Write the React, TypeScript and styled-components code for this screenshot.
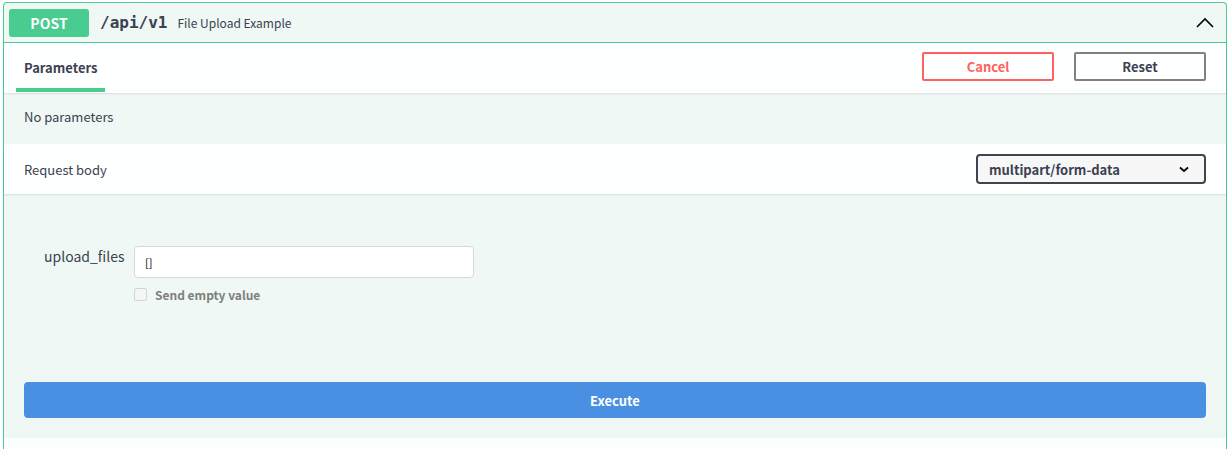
import React from "react";
import styled, { createGlobalStyle } from "styled-components";

const Global = createGlobalStyle`
  body {
    margin: 0;
    background: #fff;
    font-family: "Noto Sans CJK KR", "Noto Sans", sans-serif;
    color: #3b4151;
  }
`;

const Page = styled.div`
  padding: 2px 3px 0 3px;
`;

const OpBlock = styled.div`
  border: 1px solid #49cc90;
  border-bottom: none;
  border-radius: 4px 4px 0 0;
  background: #eff8f4;
`;

const Summary = styled.div`
  display: flex;
  align-items: center;
  height: 39px;
  padding: 0 5px;
  border-bottom: 1px solid #49cc90;
`;

const Method = styled.span`
  width: 80px;
  height: 28px;
  border-radius: 3px;
  background: #49cc90;
  color: #fff;
  font-weight: 700;
  font-size: 14px;
  display: flex;
  align-items: center;
  justify-content: center;
`;

const Path = styled.span`
  font-family: "DejaVu Sans Mono", monospace;
  font-weight: 700;
  font-size: 16px;
  margin-left: 11px;
  color: #3b4151;
`;

const Desc = styled.span`
  font-size: 12px;
  margin-left: 10px;
  color: #3b4151;
`;

const Toggle = styled.span`
  margin-left: auto;
  margin-right: 6px;
  display: flex;
`;

const SectionHeader = styled.div<{ $white?: boolean }>`
  display: flex;
  align-items: center;
  height: 50px;
  padding: 0 20px;
  background: ${(p) => (p.$white ? "rgba(255,255,255,0.92)" : "transparent")};
  box-shadow: ${(p) => (p.$white ? "0 1px 2px rgba(0,0,0,0.1)" : "none")};
`;

const TabHeader = styled(SectionHeader)`
  padding: 0 20px 0 12px;
`;

const Tab = styled.div`
  position: relative;
  height: 50px;
  display: flex;
  align-items: center;
  padding: 0 8px 2px 8px;
  box-sizing: border-box;
  font-size: 13px;
  font-weight: 700;
  &::after {
    content: "";
    position: absolute;
    left: 0;
    right: 0;
    bottom: 1px;
    height: 4px;
    background: #49cc90;
  }
`;

const Buttons = styled.div`
  margin-left: auto;
  margin-bottom: 3px;
  display: flex;
  gap: 20px;
`;

const Btn = styled.button<{ $color: string; $text: string }>`
  width: 132px;
  height: 29px;
  border: 2px solid ${(p) => p.$color};
  border-radius: 2px;
  background: transparent;
  color: ${(p) => p.$text};
  font-family: inherit;
  font-size: 13px;
  font-weight: 700;
`;

const Text = styled.div`
  font-size: 13px;
  padding: 0 20px 5px 20px;
  height: 51px;
  box-sizing: border-box;
  display: flex;
  align-items: center;
`;

const Label = styled.span`
  font-size: 13px;
`;

const Select = styled.div`
  margin-left: auto;
  width: 230px;
  height: 30px;
  box-sizing: border-box;
  border: 2px solid #41444e;
  border-radius: 4px;
  background: #f7f7f7;
  display: flex;
  align-items: center;
  padding: 0 14px 0 11px;
  font-size: 13px;
  font-weight: 700;
  justify-content: space-between;
`;

const Body = styled.div`
  padding: 52px 20px 20px 20px;
`;

const Field = styled.div`
  display: flex;
  padding-left: 20px;
`;

const FieldName = styled.div`
  width: 90px;
  font-size: 14px;
  padding-top: 0;
`;

const FieldCol = styled.div`
  display: flex;
  flex-direction: column;
`;

const Input = styled.div`
  width: 340px;
  height: 32px;
  box-sizing: border-box;
  border: 1px solid #d9d9d9;
  border-radius: 4px;
  background: #fff;
  font-size: 11px;
  padding: 0 10px;
  display: flex;
  align-items: center;
  color: #000;
`;

const Check = styled.label`
  display: flex;
  align-items: center;
  margin-top: 8px;
  font-size: 12px;
  font-weight: 700;
  color: #6b6b6b;
  opacity: 0.85;
`;

const Box = styled.span`
  width: 11px;
  height: 11px;
  border: 1px solid #d0d0d0;
  border-radius: 2px;
  background: #f5f5f5;
  margin-right: 8px;
`;

const Execute = styled.button`
  display: block;
  width: 100%;
  height: 36px;
  margin-top: 79px;
  border: none;
  border-radius: 4px;
  background: #4990e2;
  color: #fff;
  font-family: inherit;
  font-size: 13px;
  font-weight: 700;
`;

const Below = styled.div`
  height: 11px;
  border-left: 1px solid #49cc90;
  border-right: 1px solid #49cc90;
  background: #fbfefc;
`;

export default function App() {
  return (
    <Page>
      <Global />
      <OpBlock>
        <Summary>
          <Method>POST</Method>
          <Path>/api/v1</Path>
          <Desc>File Upload Example</Desc>
          <Toggle>
            <svg width="20" height="20" viewBox="0 0 20 20">
              <path d="M2 14 L10 6 L18 14" fill="none" stroke="#000" strokeWidth="1.6" />
            </svg>
          </Toggle>
        </Summary>
        <TabHeader $white>
          <Tab>Parameters</Tab>
          <Buttons>
            <Btn $color="#ff6060" $text="#ff6060">Cancel</Btn>
            <Btn $color="#808080" $text="#3b4151">Reset</Btn>
          </Buttons>
        </TabHeader>
        <Text>No parameters</Text>
        <SectionHeader $white>
          <Label>Request body</Label>
          <Select>
            <span>multipart/form-data</span>
            <svg width="12" height="12" viewBox="0 0 12 12">
              <path d="M2 4.5 L6 8 L10 4.5" fill="none" stroke="#000" strokeWidth="1.8" />
            </svg>
          </Select>
        </SectionHeader>
        <Body>
          <Field>
            <FieldName>upload_files</FieldName>
            <FieldCol>
              <Input>[]</Input>
              <Check>
                <Box />
                Send empty value
              </Check>
            </FieldCol>
          </Field>
          <Execute>Execute</Execute>
        </Body>
      </OpBlock>
      <Below />
    </Page>
  );
}
